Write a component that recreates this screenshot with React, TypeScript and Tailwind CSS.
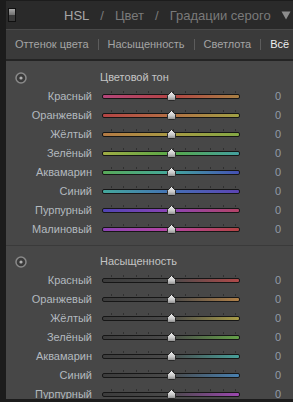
import React from "react";

const hue: [string, string, string, string][] = [
  ["Красный", "#b4457a", "#b44444", "#a88044"],
  ["Оранжевый", "#b44444", "#b47044", "#a0a044"],
  ["Жёлтый", "#b47a44", "#a89a44", "#84a844"],
  ["Зелёный", "#a0ac44", "#58a848", "#44a0a0"],
  ["Аквамарин", "#58a858", "#44a89c", "#4450b4"],
  ["Синий", "#44a89c", "#4470b4", "#5c44b4"],
  ["Пурпурный", "#5044b4", "#8c44b4", "#b44468"],
  ["Малиновый", "#8c44b4", "#b444a0", "#b44444"],
];

const sat: [string, string][] = [
  ["Красный", "#b04a4a"],
  ["Оранжевый", "#b08048"],
  ["Жёлтый", "#a89c48"],
  ["Зелёный", "#64a048"],
  ["Аквамарин", "#48a09a"],
  ["Синий", "#4880b0"],
  ["Пурпурный", "#9c48b0"],
];

const ticks = Array.from({ length: 11 }, (_, i) => 9 + i * 12.4);

function Thumb() {
  return (
    <svg width="11" height="11" viewBox="0 0 11 11" className="absolute left-[64px] top-[4px]">
      <defs>
        <linearGradient id="tg" x1="0" y1="0" x2="0" y2="1">
          <stop offset="0" stopColor="#f2f2f2" />
          <stop offset="0.6" stopColor="#c8c8c8" />
          <stop offset="1" stopColor="#8a8a8a" />
        </linearGradient>
      </defs>
      <path d="M5.5 0.5 L9.5 4.5 L9.5 8.5 Q9.5 9.5 8.5 9.5 L2.5 9.5 Q1.5 9.5 1.5 8.5 L1.5 4.5 Z" fill="url(#tg)" stroke="#2a2a2a" strokeWidth="1" />
    </svg>
  );
}

function Row({ label, bg }: { label: string; bg: string }) {
  return (
    <div className="flex h-[19px] items-center">
      <div className="w-[86px] text-right text-[11px] leading-none text-[#b3b9bf]">{label}</div>
      <div className="relative ml-[10px] h-[19px] w-[138px]">
        {ticks.map((x, i) => (
          <div key={i} className="absolute top-[4px] h-[2px] w-[1px] bg-[#303030]" style={{ left: x }} />
        ))}
        <div className="absolute left-0 right-0 top-[7px] h-[5px] rounded-[2px] border border-[#161616]" style={{ background: bg }} />
        <Thumb />
      </div>
      <div className="ml-[35px] text-[11px] leading-none text-[#929ca6]">0</div>
    </div>
  );
}

function Icon() {
  return (
    <svg width="12" height="12" viewBox="0 0 12 12">
      <circle cx="6" cy="6" r="5" fill="#3a3a3a" stroke="#8a8a8a" strokeWidth="1.5" />
      <circle cx="6" cy="6" r="1.6" fill="#b0b0b0" />
    </svg>
  );
}

function SectionHeader({ title }: { title: string }) {
  return (
    <div className="flex h-[19px] items-center">
      <div className="ml-[9px] flex w-[12px]">
        <Icon />
      </div>
      <div className="ml-[73px] text-[11px] leading-none text-[#c4c4c4]">{title}</div>
    </div>
  );
}

export default function App() {
  return (
    <div
      className="flex h-[402px] w-[293px] flex-col overflow-hidden bg-[#1c1c1c] pb-[3px] pl-[6px] pt-[1px]"
      style={{ fontFamily: '"Liberation Sans", Arial, sans-serif' }}
    >
      <div className="flex h-[28px] items-center overflow-hidden whitespace-nowrap bg-[#2a2a2a]">
        <div className="ml-[2px] flex h-[14px] w-[8px] shrink-0 flex-col border border-[#101010]">
          <div className="h-[6px] bg-gradient-to-b from-[#a8a8a8] to-[#707070]" />
          <div className="flex-1 bg-[#3a3a3a]" />
        </div>
        <div className="ml-[48px] flex shrink-0 items-center text-[13px] leading-none text-[#7a7a7a]">
          <span className="text-[#a6a6a6]">HSL</span>
          <span className="ml-[11px]">/</span>
          <span className="ml-[11px]">Цвет</span>
          <span className="ml-[11px]">/</span>
          <span className="ml-[11px]">Градации серого</span>
          <svg width="10" height="9" viewBox="0 0 10 9" className="ml-[10px]">
            <path d="M0.5 0.5 L9.5 0.5 L5 8.5 Z" fill="#8c8c8c" />
          </svg>
        </div>
      </div>
      <div className="flex h-[32px] items-center whitespace-nowrap border-t border-[#4a4a4a] border-b-2 border-b-[#242424] bg-[#3a3a3a] pl-[9px] text-[11px] leading-none text-[#a4a4a4]">
        <span>Оттенок цвета</span>
        <span className="mx-[9px] h-[11px] w-[1px] bg-[#5c5c5c]" />
        <span>Насыщенность</span>
        <span className="mx-[9px] h-[11px] w-[1px] bg-[#5c5c5c]" />
        <span>Светлота</span>
        <span className="mx-[9px] h-[11px] w-[1px] bg-[#5c5c5c]" />
        <span className="text-[#f0f0f0]">Всё</span>
      </div>
      <div className="flex-1 overflow-hidden bg-[#474747] pt-[7px]">
        <SectionHeader title="Цветовой тон" />
        {hue.map(([l, a, b, c]) => (
          <Row key={l} label={l} bg={`linear-gradient(to right, ${a}, ${b}, ${c})`} />
        ))}
        <div className="mt-[6px] h-[1px] bg-[#3a3a3a]" />
        <div className="pt-[6px]">
          <SectionHeader title="Насыщенность" />
          {sat.map(([l, c]) => (
            <Row key={l} label={l} bg={`linear-gradient(to right, #3c3c3c, #4a4a4a 50%, ${c})`} />
          ))}
        </div>
      </div>
    </div>
  );
}
